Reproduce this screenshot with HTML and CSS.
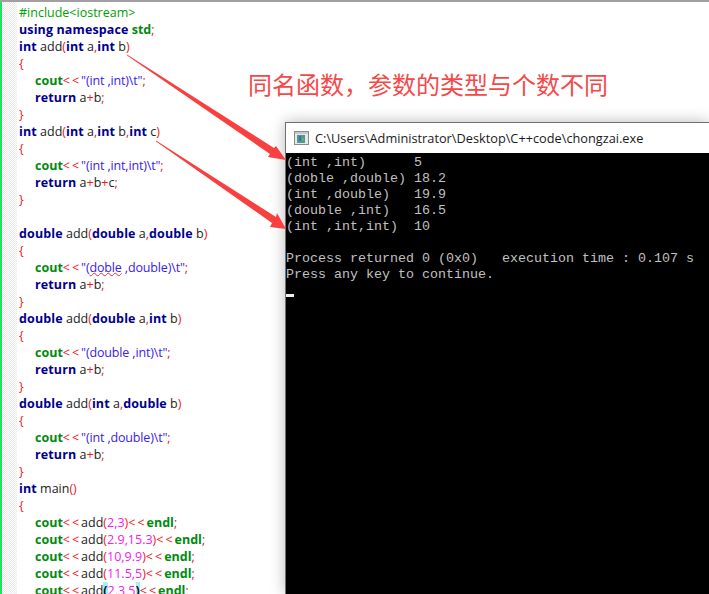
FILE: index.html
```html
<!DOCTYPE html>
<html lang="zh-CN">
<head>
<meta charset="utf-8">
<title>chongzai</title>
<link rel="stylesheet" href="styles.css">
</head>
<body>
<div class="stage">
  <div class="topline"></div>
  <main class="editor">
    <div class="gutter"></div>
    <pre class="code"><span class="pp">#include&lt;iostream&gt;</span>
<b class="k">using namespace</b> <b class="g">std</b><i>;</i>
<b class="k">int</b> add<i>(</i><b class="k">int</b> a<i>,</i><b class="k">int</b> b<i>)</i>
<i>{</i>
	<b class="g">cout</b><i class="op">&lt;&lt;</i><span class="s">"(int ,int)\t"</span><i>;</i>
	<b class="k">return</b> a<i>+</i>b<i>;</i>
<i>}</i>
<b class="k">int</b> add<i>(</i><b class="k">int</b> a<i>,</i><b class="k">int</b> b<i>,</i><b class="k">int</b> c<i>)</i>
<i>{</i>
	<b class="g">cout</b><i class="op">&lt;&lt;</i><span class="s">"(int ,int,int)\t"</span><i>;</i>
	<b class="k">return</b> a<i>+</i>b<i>+</i>c<i>;</i>
<i>}</i>

<b class="k">double</b> add<i>(</i><b class="k">double</b> a<i>,</i><b class="k">double</b> b<i>)</i>
<i>{</i>
	<b class="g">cout</b><i class="op">&lt;&lt;</i><span class="s">"(<u>doble</u> ,double)\t"</span><i>;</i>
	<b class="k">return</b> a<i>+</i>b<i>;</i>
<i>}</i>
<b class="k">double</b> add<i>(</i><b class="k">double</b> a<i>,</i><b class="k">int</b> b<i>)</i>
<i>{</i>
	<b class="g">cout</b><i class="op">&lt;&lt;</i><span class="s">"(double ,int)\t"</span><i>;</i>
	<b class="k">return</b> a<i>+</i>b<i>;</i>
<i>}</i>
<b class="k">double</b> add<i>(</i><b class="k">int</b> a<i>,</i><b class="k">double</b> b<i>)</i>
<i>{</i>
	<b class="g">cout</b><i class="op">&lt;&lt;</i><span class="s">"(int ,double)\t"</span><i>;</i>
	<b class="k">return</b> a<i>+</i>b<i>;</i>
<i>}</i>
<b class="k">int</b> main<i>()</i>
<i>{</i>
	<b class="g">cout</b><i class="op">&lt;&lt;</i>add<i>(</i><span class="n">2,3</span><i>)</i><i class="op">&lt;&lt;</i><b class="g">endl</b><i>;</i>
	<b class="g">cout</b><i class="op">&lt;&lt;</i>add<i>(</i><span class="n">2.9,15.3</span><i>)</i><i class="op">&lt;&lt;</i><b class="g">endl</b><i>;</i>
	<b class="g">cout</b><i class="op">&lt;&lt;</i>add<i>(</i><span class="n">10,9.9</span><i>)</i><i class="op">&lt;&lt;</i><b class="g">endl</b><i>;</i>
	<b class="g">cout</b><i class="op">&lt;&lt;</i>add<i>(</i><span class="n">11.5,5</span><i>)</i><i class="op">&lt;&lt;</i><b class="g">endl</b><i>;</i>
	<b class="g">cout</b><i class="op">&lt;&lt;</i>add<i class="match">(</i><span class="n">2,3,5</span><i class="match">)</i><i class="op">&lt;&lt;</i><b class="g">endl</b><i>;</i></pre>
  </main>

  <p class="note">同名函数，参数的类型与个数不同</p>

  <section class="console">
    <header class="titlebar">
      <svg class="appicon" width="16" height="16" viewBox="0 0 16 16" aria-hidden="true">
        <rect x="0.5" y="1.5" width="14" height="13" fill="#e8e8e8" stroke="#8a8a8a"/>
        <rect x="1" y="2" width="13" height="2" fill="#c9c9c9"/>
        <rect x="3" y="5" width="8" height="8" fill="#4f9a8c"/>
        <rect x="5" y="6" width="2" height="5" fill="#3c6fb4"/>
        <rect x="8" y="8" width="2" height="3" fill="#5fb35f"/>
      </svg>
      <span class="wintitle">C:\Users\Administrator\Desktop\C++code\chongzai.exe</span>
    </header>
    <pre class="output">(int ,int)      5
(doble ,double) 18.2
(int ,double)   19.9
(double ,int)   16.5
(int ,int,int)  10

Process returned 0 (0x0)   execution time : 0.107 s
Press any key to continue.
<span class="cursor"></span></pre>
  </section>

  <svg class="arrows" width="709" height="594" viewBox="0 0 709 594" aria-hidden="true">
    <path class="arrow" d="M127 54.5 L274 148 L276 146 L286 160 L268 157 L270 154 L127 55.5 Z"/>
    <path class="arrow" d="M156 140.5 L276 217 L277 213 L286 229 L270 227 L272 223 L156 141.5 Z"/>
  </svg>
</div>
</body>
</html>
```

FILE: styles.css
```css
* { box-sizing: border-box; }
html, body { margin: 0; padding: 0; background: #fff; }
.stage {
  position: relative;
  width: 709px;
  height: 594px;
  overflow: hidden;
  display: flex;
  flex-direction: column;
}
.topline { height: 2px; background: #a0a0a0; flex: none; }
.editor { display: flex; flex: 1; min-height: 0; overflow: hidden; }
.gutter {
  flex: none;
  width: 17px;
  border-left: 2px solid #19e65a;
  background-color: #f6f6f6;
  background-image: repeating-conic-gradient(#e9e9e9 0 25%, #fff 0 50%);
  background-size: 2px 2px;
}
.code {
  margin: 0;
  padding: 2px 0 0 2px;
  font-family: "Open Sans", "Noto Sans", sans-serif;
  font-size: 12.5px;
  line-height: 17px;
  color: #222;
  tab-size: 16px;
}
.code b { font-weight: 700; }
.code i { font-style: normal; color: #f01818; }
.code .op { letter-spacing: 2px; }
.k { color: #00008f; letter-spacing: .12px; }
.g { color: #008a10; }
.pp { color: #00a000; }
.s { color: #3a20f0; letter-spacing: -.15px; }
.n { color: #f020f0; }
.code u { text-decoration: underline wavy #e03030 1px; text-underline-offset: 0; }
.code .match { background: #a8ecff; color: #101010; font-weight: 700; }
.note {
  position: absolute;
  left: 248px;
  top: 69px;
  margin: 0;
  font-family: "Noto Sans CJK SC", sans-serif;
  font-size: 24px;
  line-height: 30px;
  color: #f54848;
  white-space: nowrap;
}
.console {
  position: absolute;
  left: 285px;
  top: 122px;
  width: 424px;
  height: 472px;
  display: flex;
  flex-direction: column;
  border: 1px solid #707070;
  border-right: 0;
  border-bottom: 0;
  background: #000;
  box-shadow: 0 0 14px rgba(0, 0, 0, .28);
}
.titlebar {
  flex: none;
  height: 30px;
  background: #fff;
  display: flex;
  align-items: center;
  gap: 5px;
  padding-left: 8px;
}
.appicon { flex: none; }
.wintitle {
  font-family: "Open Sans", "Noto Sans", sans-serif;
  font-size: 12.75px;
  color: #1a1a1a;
  white-space: nowrap;
}
.output {
  margin: 0;
  padding-top: 2px;
  font-family: "Liberation Mono", monospace;
  font-size: 13.33px;
  line-height: 16px;
  color: #c0c0c0;
}
.cursor {
  display: inline-block;
  width: 8px;
  height: 3px;
  margin-top: 11px;
  background: #f0f0f0;
  vertical-align: top;
}
.arrows { position: absolute; left: 0; top: 0; pointer-events: none; }
.arrow { fill: #f84040; }
```
